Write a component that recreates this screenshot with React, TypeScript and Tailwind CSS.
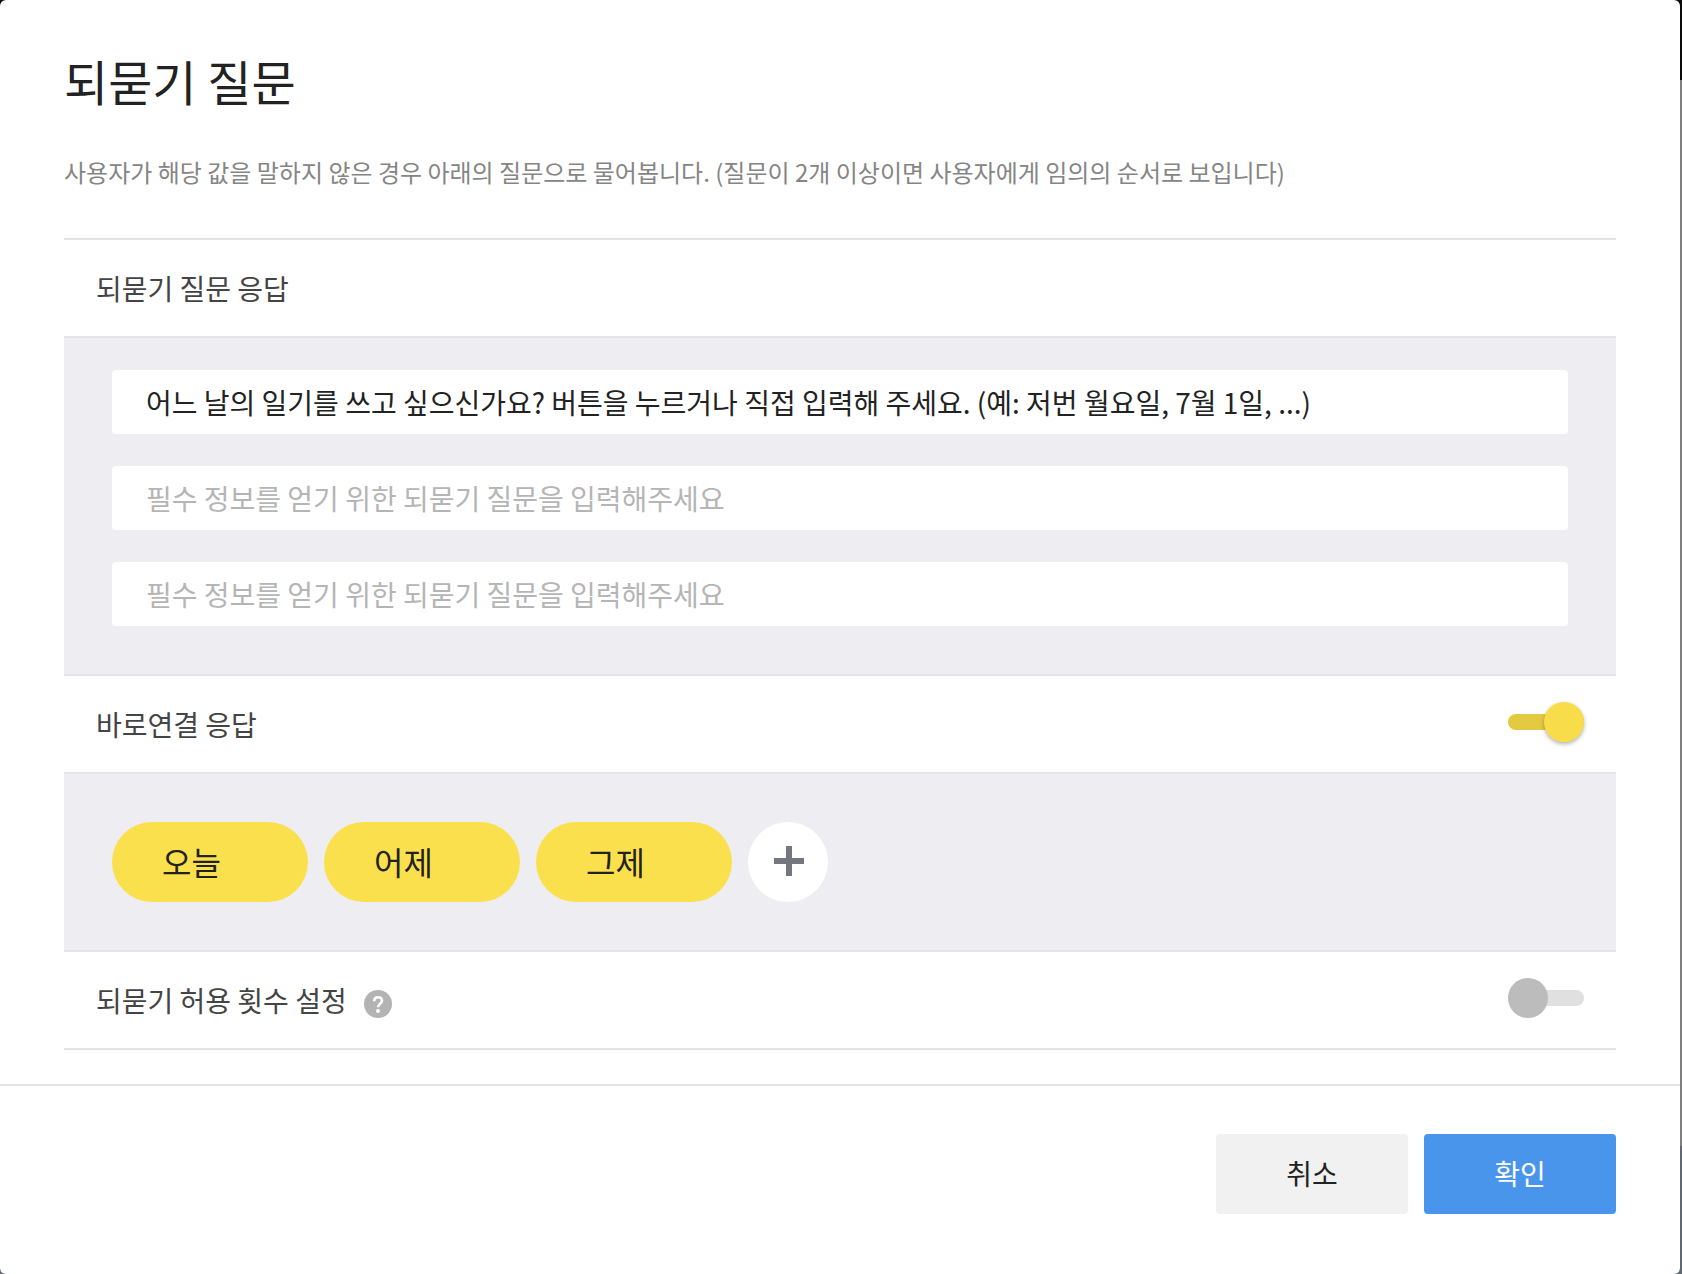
import { useState } from "react";

/* ──────── Types ──────── */
interface ToggleProps {
  id: string;
  checked: boolean;
  onChange: (checked: boolean) => void;
}

const PLACEHOLDER = "필수 정보를 얻기 위한 되묻기 질문을 입력해주세요";

function Toggle({ id, checked, onChange }: ToggleProps) {
  return (
    <input
      id={id}
      type="checkbox"
      role="switch"
      checked={checked}
      onChange={e => onChange(e.target.checked)}
      className="relative mb-1 h-10 w-[76px] shrink-0 cursor-pointer appearance-none before:absolute before:inset-x-0 before:top-3 before:h-4 before:rounded-full before:bg-[#e0e0e0] after:absolute after:left-0 after:top-0 after:size-10 after:rounded-full after:bg-[#bcbcbc] checked:before:bg-[#e4ca43] checked:after:left-9 checked:after:bg-[#f9dc4a] checked:after:shadow-[0_2px_4px_rgba(0,0,0,0.3)]"
    />
  );
}

function HelpIcon() {
  return (
    <svg viewBox="0 0 28 28" className="size-7" fill="none" aria-hidden="true">
      <circle cx="14" cy="14" r="14" fill="#b3b3b3" />
      <path
        d="M10.2 11.2C10.2 8.7 11.8 7.2 14.1 7.2C16.4 7.2 18 8.6 18 10.7C18 13.6 14 13.9 14 17.2"
        stroke="#fff"
        strokeWidth="2.6"
      />
      <circle cx="14" cy="21" r="2" fill="#fff" />
    </svg>
  );
}

export default function App() {
  const [questions, setQuestions] = useState([
    "어느 날의 일기를 쓰고 싶으신가요? 버튼을 누르거나 직접 입력해 주세요. (예: 저번 월요일, 7월 1일, ...)",
    "",
    "",
  ]);
  const [replies, setReplies] = useState(["오늘", "어제", "그제"]);
  const [quickReply, setQuickReply] = useState(true);
  const [limit, setLimit] = useState(false);

  const updateQuestion = (index: number, value: string) => {
    setQuestions(questions.map((q, i) => (i === index ? value : q)));
  };

  return (
    <div className="flex min-h-screen flex-col bg-[linear-gradient(to_bottom,#0a0a0a_80px,#7f7f7f_80px,#7f7f7f_1146px,#626872_1146px)] pr-0.5 font-['Noto_Sans_CJK_KR',sans-serif] text-[28px] leading-10 text-[#222]">
      <div role="dialog" aria-labelledby="dialog-title" className="flex grow flex-col rounded-md bg-white">
        <div className="px-16 pb-[34px] pt-11">
          <h1 id="dialog-title" className="text-5xl leading-[72px]">되묻기 질문</h1>
          <p className="mb-[46px] mt-9 text-2xl leading-10 text-[#858585]">
            사용자가 해당 값을 말하지 않은 경우 아래의 질문으로 물어봅니다. (질문이 2개 이상이면 사용자에게 임의의 순서로 보입니다)
          </p>

          <section className="border-t-2 border-[#e4e4e4]">
            <h2 className="flex h-24 items-center px-8 text-[#444]">되묻기 질문 응답</h2>
            <div className="flex flex-col gap-8 border-y-2 border-[#e4e4e4] bg-[#eeedf2] px-12 pb-12 pt-8">
              {questions.map((q, i) => (
                <input
                  key={i}
                  type="text"
                  aria-label={`되묻기 질문 ${i + 1}`}
                  value={q}
                  placeholder={PLACEHOLDER}
                  onChange={e => updateQuestion(i, e.target.value)}
                  className="h-16 w-full rounded bg-white px-[34px] outline-none placeholder:text-[#b5b5b5]"
                />
              ))}
            </div>
          </section>

          <section>
            <div className="flex h-24 items-center justify-between px-8 text-[#444]">
              <label htmlFor="quick-reply">바로연결 응답</label>
              <Toggle id="quick-reply" checked={quickReply} onChange={setQuickReply} />
            </div>
            <div className="flex flex-wrap gap-4 border-y-2 border-[#e4e4e4] bg-[#eeedf2] p-12">
              {replies.map((reply, i) => (
                <button
                  key={i}
                  type="button"
                  className="h-20 min-w-[196px] rounded-full bg-[#fae04c] px-[50px] pb-0.5 text-left text-[32px]"
                >
                  {reply}
                </button>
              ))}
              <button
                type="button"
                aria-label="추가"
                onClick={() => setReplies([...replies, ""])}
                className="flex size-20 items-center justify-center rounded-full bg-white"
              >
                <svg viewBox="0 0 32 32" className="size-8" fill="#757780" aria-hidden="true">
                  <path d="M14 0h6v12h12v6H20v12h-6V18H2v-6h12z" />
                </svg>
              </button>
            </div>
          </section>

          <section className="flex h-[98px] items-center justify-between border-b-2 border-[#e4e4e4] px-8 text-[#444]">
            <div className="flex items-center gap-[17px]">
              <label htmlFor="limit">되묻기 허용 횟수 설정</label>
              <button type="button" aria-label="도움말" className="mt-2">
                <HelpIcon />
              </button>
            </div>
            <Toggle id="limit" checked={limit} onChange={setLimit} />
          </section>
        </div>

        <footer className="flex grow items-start justify-end gap-4 border-t-2 border-[#e4e4e4] px-16 pb-[60px] pt-12">
          <button type="button" className="h-20 w-48 rounded bg-[#f1f1f1] pb-0.5">취소</button>
          <button type="button" className="h-20 w-48 rounded bg-[#4995ec] pb-0.5 text-white">확인</button>
        </footer>
      </div>
    </div>
  );
}
